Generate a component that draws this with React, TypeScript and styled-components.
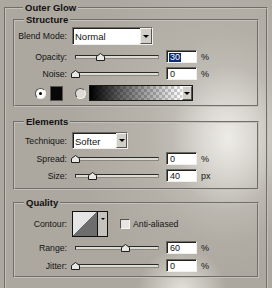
import React from 'react';
import styled, { createGlobalStyle } from 'styled-components';

const Global = createGlobalStyle`
  html, body { margin: 0; padding: 0; }
  body { width: 272px; height: 288px; overflow: hidden; font-family: "Liberation Sans", Arial, sans-serif; }
`;

const Page = styled.div`
  width: 272px;
  height: 288px;
  overflow: hidden;
  box-sizing: border-box;
  padding: 2px 0 0 4px;
  color: #141414;
  font-size: 8.7px;
  background:
    radial-gradient(ellipse 80px 105px at 228px 138px, rgba(238, 236, 230, 1) 0%, rgba(226, 224, 218, 0.75) 35%, rgba(200, 197, 190, 0.35) 70%, rgba(172, 168, 159, 0) 100%),
    radial-gradient(ellipse 45px 45px at 182px 292px, rgba(232, 230, 224, 0.95) 0%, rgba(172, 168, 159, 0) 100%),
    radial-gradient(ellipse 140px 160px at 210px 120px, rgba(196, 193, 186, 0.8) 0%, rgba(172, 168, 159, 0) 100%),
    #aca89f;
`;

const Group = styled.fieldset<{ $outer?: boolean; $mt?: number }>`
  margin: ${p => p.$mt ?? 0}px 0 0 0;
  padding: ${p => (p.$outer ? '0 7px' : '0')};
  border: 2px groove #c4c1b9;
  box-sizing: border-box;
  width: ${p => (p.$outer ? '264px' : '246px')};
  ${p => (p.$outer ? 'height: 300px;' : '')}
  min-width: 0;
`;

const Legend = styled.legend<{ $outer?: boolean }>`
  margin-left: ${p => (p.$outer ? 10 : 9)}px;
  padding: 0 2px;
  font-weight: bold;
  font-size: 9.5px;
  line-height: 12px;
  color: #111;
`;

const Body = styled.div<{ $pt: number; $pb: number }>`
  display: flex;
  flex-direction: column;
  padding: ${p => p.$pt}px 0 ${p => p.$pb}px 0;
`;

const Row = styled.div<{ $h: number; $mt?: number }>`
  display: flex;
  align-items: center;
  height: ${p => p.$h}px;
  margin-top: ${p => p.$mt ?? 0}px;
`;

const Label = styled.span`
  width: 52px;
  text-align: right;
  white-space: nowrap;
  flex: none;
`;

const Select = styled.div<{ $w: number }>`
  margin-left: 5px;
  width: ${p => p.$w}px;
  height: 100%;
  box-sizing: border-box;
  display: flex;
  align-items: stretch;
  background: #fff;
  border: 1px solid;
  border-color: #6c6962 #f2f0ec #f2f0ec #6c6962;
  box-shadow: inset 1px 1px 0 #222;
`;

const SelectText = styled.span`
  flex: 1;
  display: flex;
  align-items: center;
  padding-left: 2px;
  padding-top: 1px;
  font-size: 9.5px;
`;

const ArrowBtn = styled.span<{ $w: number }>`
  width: ${p => p.$w}px;
  box-sizing: border-box;
  display: flex;
  align-items: center;
  justify-content: center;
  background: #d2cfc8;
  border: 1px solid;
  border-color: #f4f2ee #555 #555 #f4f2ee;
  &::after {
    content: '';
    border-left: 3px solid transparent;
    border-right: 3px solid transparent;
    border-top: 3px solid #000;
  }
`;

const SliderBox = styled.div`
  position: relative;
  margin-left: 4px;
  width: 92px;
  height: 100%;
  flex: none;
`;

const Track = styled.div`
  margin: 0 4px;
  height: 100%;
  display: flex;
  align-items: center;
  &::before {
    content: '';
    flex: 1;
    height: 4px;
    box-sizing: border-box;
    background: #dedbd4;
    border: 1px solid;
    border-color: #2a2a2a #8a877f #8a877f #2a2a2a;
  }
`;

const Thumb = styled.svg`
  position: absolute;
  top: 3px;
  width: 9px;
  height: 8px;
  margin-left: -4.5px;
`;

const Field = styled.span`
  margin-left: 3px;
  width: 31px;
  height: 13px;
  box-sizing: border-box;
  background: #fff;
  border: 1px solid;
  border-color: #6c6962 #f2f0ec #f2f0ec #6c6962;
  box-shadow: inset 1px 1px 0 #222;
  display: flex;
  align-items: center;
  padding-left: 3px;
  padding-top: 1px;
  font-size: 9px;
  flex: none;
`;

const Selected = styled.span`
  background: #0c2a78;
  color: #fff;
  padding: 0 1px;
  margin-left: -1px;
  line-height: 9px;
`;

const Unit = styled.span`
  margin-left: 4px;
  font-size: 9px;
`;

const Radio = styled.span<{ $checked?: boolean; $ml: number }>`
  margin-left: ${p => p.$ml}px;
  width: 11px;
  height: 11px;
  box-sizing: border-box;
  border-radius: 50%;
  border: 1px solid;
  border-color: #55524c #f6f4f0 #f6f4f0 #55524c;
  background: ${p => (p.$checked ? '#fff' : '#dedcd6')};
  display: flex;
  align-items: center;
  justify-content: center;
  flex: none;
  &::after {
    content: '';
    width: 3px;
    height: 3px;
    border-radius: 50%;
    background: ${p => (p.$checked ? '#000' : 'transparent')};
  }
`;

const Swatch = styled.span`
  margin-left: 4px;
  width: 13px;
  height: 15px;
  background: #080808;
  border: 1px solid #555;
  box-sizing: border-box;
  flex: none;
`;

const Gradient = styled.div`
  margin-left: 3px;
  width: 104px;
  height: 16px;
  box-sizing: border-box;
  border: 1px solid #1a1a1a;
  display: flex;
  flex: none;
`;

const GradFill = styled.span`
  flex: 1;
  background:
    linear-gradient(to right, #000 0%, rgba(0, 0, 0, 0.6) 35%, rgba(0, 0, 0, 0) 100%),
    repeating-conic-gradient(#cfcfcf 0% 25%, #ffffff 0% 50%) 0 0 / 6px 6px;
`;

const Contour = styled.div`
  margin-left: 5px;
  width: 36px;
  height: 26px;
  box-sizing: border-box;
  border: 1px solid #111;
  display: flex;
  flex: none;
`;

const ContourCurve = styled.span`
  flex: 1;
  background: linear-gradient(to bottom right, #e6e6e6 50%, #6d6d6d 50%);
`;

const ContourArrow = styled.span`
  width: 10px;
  background: #c6c3bc;
  border-left: 1px solid #111;
  display: flex;
  justify-content: center;
  padding-top: 6px;
  box-sizing: border-box;
  &::after {
    content: '';
    height: 0;
    border-left: 2px solid transparent;
    border-right: 2px solid transparent;
    border-top: 2px solid #000;
  }
`;

const Check = styled.span`
  margin-left: 12px;
  width: 10px;
  height: 10px;
  box-sizing: border-box;
  background: #e6e5e1;
  border: 1px solid;
  border-color: #55524c #f6f4f0 #f6f4f0 #55524c;
  flex: none;
`;

const CheckText = styled.span`
  margin-left: 3px;
`;

function Slider({ pos }: { pos: number }) {
  return (
    <SliderBox>
      <Track />
      <Thumb viewBox="0 0 9 8" style={{ left: 4 + pos }}>
        <path d="M0.5 7.5 V3.5 L4.5 0.5 L8.5 3.5 V7.5 Z" fill="#e9e7e2" stroke="#1e1e1e" strokeWidth="1" />
      </Thumb>
    </SliderBox>
  );
}

function SliderRow({ label, pos, value, unit, mt, selected }: { label: string; pos: number; value: string; unit: string; mt: number; selected?: boolean }) {
  return (
    <Row $h={13} $mt={mt}>
      <Label>{label}</Label>
      <Slider pos={pos} />
      <Field>{selected ? <Selected>{value}</Selected> : value}</Field>
      <Unit>{unit}</Unit>
    </Row>
  );
}

export default function App() {
  return (
    <Page>
      <Global />
      <Group $outer>
        <Legend $outer>Outer Glow</Legend>
        <Group>
          <Legend>Structure</Legend>
          <Body $pt={1} $pb={4}>
            <Row $h={18}>
              <Label>Blend Mode:</Label>
              <Select $w={81}>
                <SelectText>Normal</SelectText>
                <ArrowBtn $w={12} />
              </Select>
            </Row>
            <SliderRow label="Opacity:" pos={25} value="30" unit="%" mt={5} selected />
            <SliderRow label="Noise:" pos={0} value="0" unit="%" mt={4} />
            <Row $h={16} $mt={5}>
              <Radio $checked $ml={20} />
              <Swatch />
              <Radio $ml={12} />
              <Gradient>
                <GradFill />
                <ArrowBtn $w={10} />
              </Gradient>
            </Row>
          </Body>
        </Group>
        <Group $mt={9}>
          <Legend>Elements</Legend>
          <Body $pt={4} $pb={6}>
            <Row $h={17}>
              <Label>Technique:</Label>
              <Select $w={56}>
                <SelectText>Softer</SelectText>
                <ArrowBtn $w={11} />
              </Select>
            </Row>
            <SliderRow label="Spread:" pos={0} value="0" unit="%" mt={3} />
            <SliderRow label="Size:" pos={17} value="40" unit="px" mt={4} />
          </Body>
        </Group>
        <Group $mt={7}>
          <Legend>Quality</Legend>
          <Body $pt={2} $pb={4}>
            <Row $h={26}>
              <Label>Contour:</Label>
              <Contour>
                <ContourCurve />
                <ContourArrow />
              </Contour>
              <Check />
              <CheckText>Anti-aliased</CheckText>
            </Row>
            <SliderRow label="Range:" pos={50} value="60" unit="%" mt={4} />
            <SliderRow label="Jitter:" pos={0} value="0" unit="%" mt={5} />
          </Body>
        </Group>
      </Group>
    </Page>
  );
}
